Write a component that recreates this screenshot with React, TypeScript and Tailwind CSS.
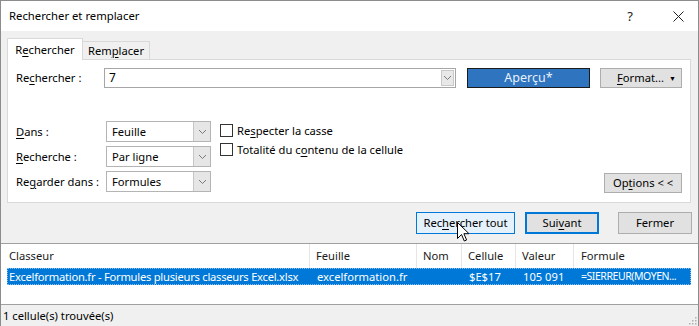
import React from 'react';

const Chevron = () => (
  <svg width="9" height="6" viewBox="0 0 9 6" className="block">
    <path d="M1 1 L4.5 4.5 L8 1" fill="none" stroke="#7a7a7a" strokeWidth="1" />
  </svg>
);

function Select({ value }: { value: string }) {
  return (
    <div className="flex h-[21px] w-[105px] items-stretch border border-[#b4b4b4] bg-white">
      <div className="flex flex-1 items-center pl-[5px]">{value}</div>
      <div className="flex w-[17px] items-center justify-center border-l border-[#c6c6c6] bg-[#e6e6e6]">
        <Chevron />
      </div>
    </div>
  );
}

function Check({ children }: { children: React.ReactNode }) {
  return (
    <div className="flex h-[19px] items-center">
      <div className="h-[13px] w-[13px] border border-[#333] bg-white" />
      <span className="ml-[4px]">{children}</span>
    </div>
  );
}

const U = ({ children }: { children: React.ReactNode }) => (
  <span className="underline underline-offset-2">{children}</span>
);

export default function App() {
  return (
    <div className="relative h-[326px] w-[699px] overflow-hidden whitespace-nowrap border-x border-t border-[#8c8c8c] bg-[#f0f0f0] font-['Noto_Sans',sans-serif] text-[11.2px] leading-none text-black">
      {/* title bar */}
      <div className="flex h-[30px] items-center bg-white pl-[8px]">
        <span className="text-[11.3px]">Rechercher et remplacer</span>
        <span className="ml-auto mr-[40px] text-[13px] text-[#222]">?</span>
        <svg width="11" height="11" viewBox="0 0 11 11" className="mr-[14px]">
          <path d="M0.5 0.5 L10.5 10.5 M10.5 0.5 L0.5 10.5" stroke="#222" strokeWidth="1" />
        </svg>
      </div>

      {/* tabs */}
      <div className="flex items-end pl-[6px] pt-[7px]">
        <div className="relative z-10 -mb-px flex h-[22px] w-[76px] items-center justify-center border-x border-t border-[#d9d9d9] bg-white">
          R<U>e</U>chercher
        </div>
        <div className="flex h-[18px] w-[67px] items-center justify-center border-r border-t border-[#d9d9d9] bg-[#f0f0f0]">
          Rem<U>p</U>lacer
        </div>
      </div>

      {/* panel */}
      <div className="ml-[6px] flex h-[144px] w-[684px] flex-col border border-[#d9d9d9] bg-white">
        <div className="mt-[8px] flex h-[20px] items-center">
          <div className="w-[96px] pl-[8px]">
            Re<U>c</U>hercher :
          </div>
          <div className="flex h-[20px] w-[352px] items-center border border-[#a6a6a6] bg-white">
            <span className="pl-[4px] text-[12px]">7</span>
            <div className="ml-auto mr-[1px] flex h-[16px] w-[13px] items-center justify-center border border-[#c8c8c8] bg-[#e8e8e8]">
              <Chevron />
            </div>
          </div>
          <div className="ml-[11px] flex h-[20px] w-[123px] items-center justify-center border border-[#1b1b1b] bg-[#2f74bf] text-[12.5px] text-[#e8f1fb]">
            Aperçu*
          </div>
          <div className="ml-[10px] flex h-[20px] w-[82px] items-center border border-[#adadad] bg-[#e1e1e1] pl-[16px]">
            <span>
              <U>F</U>ormat...
            </span>
            <span className="ml-auto mr-[5px] text-[7px]">▼</span>
          </div>
        </div>

        <div className="mt-[33px] flex flex-1 items-start pb-[9px]">
          <div className="flex flex-col gap-[4px]">
            <div className="flex items-center">
              <div className="w-[98px] pl-[8px]">
                <U>D</U>ans :
              </div>
              <Select value="Feuille" />
            </div>
            <div className="flex items-center">
              <div className="w-[98px] pl-[8px]">
                <U>R</U>echerche :
              </div>
              <Select value="Par ligne" />
            </div>
            <div className="flex items-center">
              <div className="w-[98px] pl-[8px]">
                Re<U>g</U>arder dans :
              </div>
              <Select value="Formules" />
            </div>
          </div>
          <div className="ml-[9px] flex flex-col">
            <Check>
              Re<U>s</U>pecter la casse
            </Check>
            <Check>
              Totalité du c<U>o</U>ntenu de la cellule
            </Check>
          </div>
          <div className="mr-[8px] ml-auto flex h-[20px] w-[78px] items-center justify-center self-end border border-[#adadad] bg-[#e1e1e1]">
            Op<U>t</U>ions &lt; &lt;
          </div>
        </div>
      </div>

      {/* buttons */}
      <div className="mt-[9px] flex justify-end pr-[6px]">
        <div className="flex h-[22px] w-[99px] items-center justify-center border border-[#0078d7] bg-[#e5f1fb]">
          Rec<U>h</U>ercher tout
        </div>
        <div className="ml-[10px] flex h-[22px] w-[74px] items-center justify-center border-2 border-[#0078d7] bg-[#e1e1e1]">
          Sui<U>v</U>ant
        </div>
        <div className="ml-[19px] flex h-[22px] w-[74px] items-center justify-center border border-[#adadad] bg-[#e1e1e1]">
          Fermer
        </div>
      </div>

      {/* results table */}
      <div className="mt-[9px] flex h-[62px] flex-col border-y border-[#a0a0a0] bg-white">
        <div className="flex h-[24px] items-stretch text-[#1a1a1a]">
          <div className="flex w-[309px] items-center border-r border-[#e5e5e5] pl-[8px]">Classeur</div>
          <div className="flex w-[107px] items-center border-r border-[#e5e5e5] pl-[6px]">Feuille</div>
          <div className="flex w-[45px] items-center border-r border-[#e5e5e5] pl-[6px]">Nom</div>
          <div className="flex w-[54px] items-center border-r border-[#e5e5e5] pl-[6px]">Cellule</div>
          <div className="flex w-[58px] items-center border-r border-[#e5e5e5] pl-[6px]">Valeur</div>
          <div className="flex flex-1 items-center pl-[7px]">Formule</div>
        </div>
        <div className="ml-[6px] flex h-[17px] w-[684px] items-center overflow-hidden bg-[#0078d7] text-white outline outline-1 -outline-offset-1 outline-dotted outline-[#8dbfee]">
          <div className="w-[304px] pl-[2px] tracking-[-0.25px]">Excelformation.fr - Formules plusieurs classeurs Excel.xlsx</div>
          <div className="w-[107px] pl-[6px]">excelformation.fr</div>
          <div className="w-[45px]" />
          <div className="w-[54px] pl-[6px]">$E$17</div>
          <div className="w-[58px] pl-[6px]">105 091</div>
          <div className="flex-1 pl-[6px] text-[10.5px] tracking-[-0.45px]">=SIERREUR(MOYEN...</div>
        </div>
      </div>

      {/* status bar */}
      <div className="relative flex h-[21px] items-center pl-[2px]">
        1 cellule(s) trouvée(s)
        <svg width="10" height="10" viewBox="0 0 10 10" className="absolute bottom-[1px] right-[1px]">
          {[
            [8, 2], [8, 5], [5, 5], [8, 8], [5, 8], [2, 8],
          ].map(([x, y], i) => (
            <rect key={i} x={x} y={y} width="1.5" height="1.5" fill="#b0b0b0" />
          ))}
        </svg>
      </div>

      {/* mouse cursor */}
      <svg width="13" height="21" viewBox="0 0 13 21" className="absolute left-[456px] top-[221px]">
        <path d="M0.5 0.5 L0.5 16.5 L4.5 12.5 L7.3 19 L9.6 18 L6.9 11.7 L12 11.7 Z" fill="white" stroke="black" strokeWidth="1" strokeLinejoin="round" />
      </svg>
    </div>
  );
}
